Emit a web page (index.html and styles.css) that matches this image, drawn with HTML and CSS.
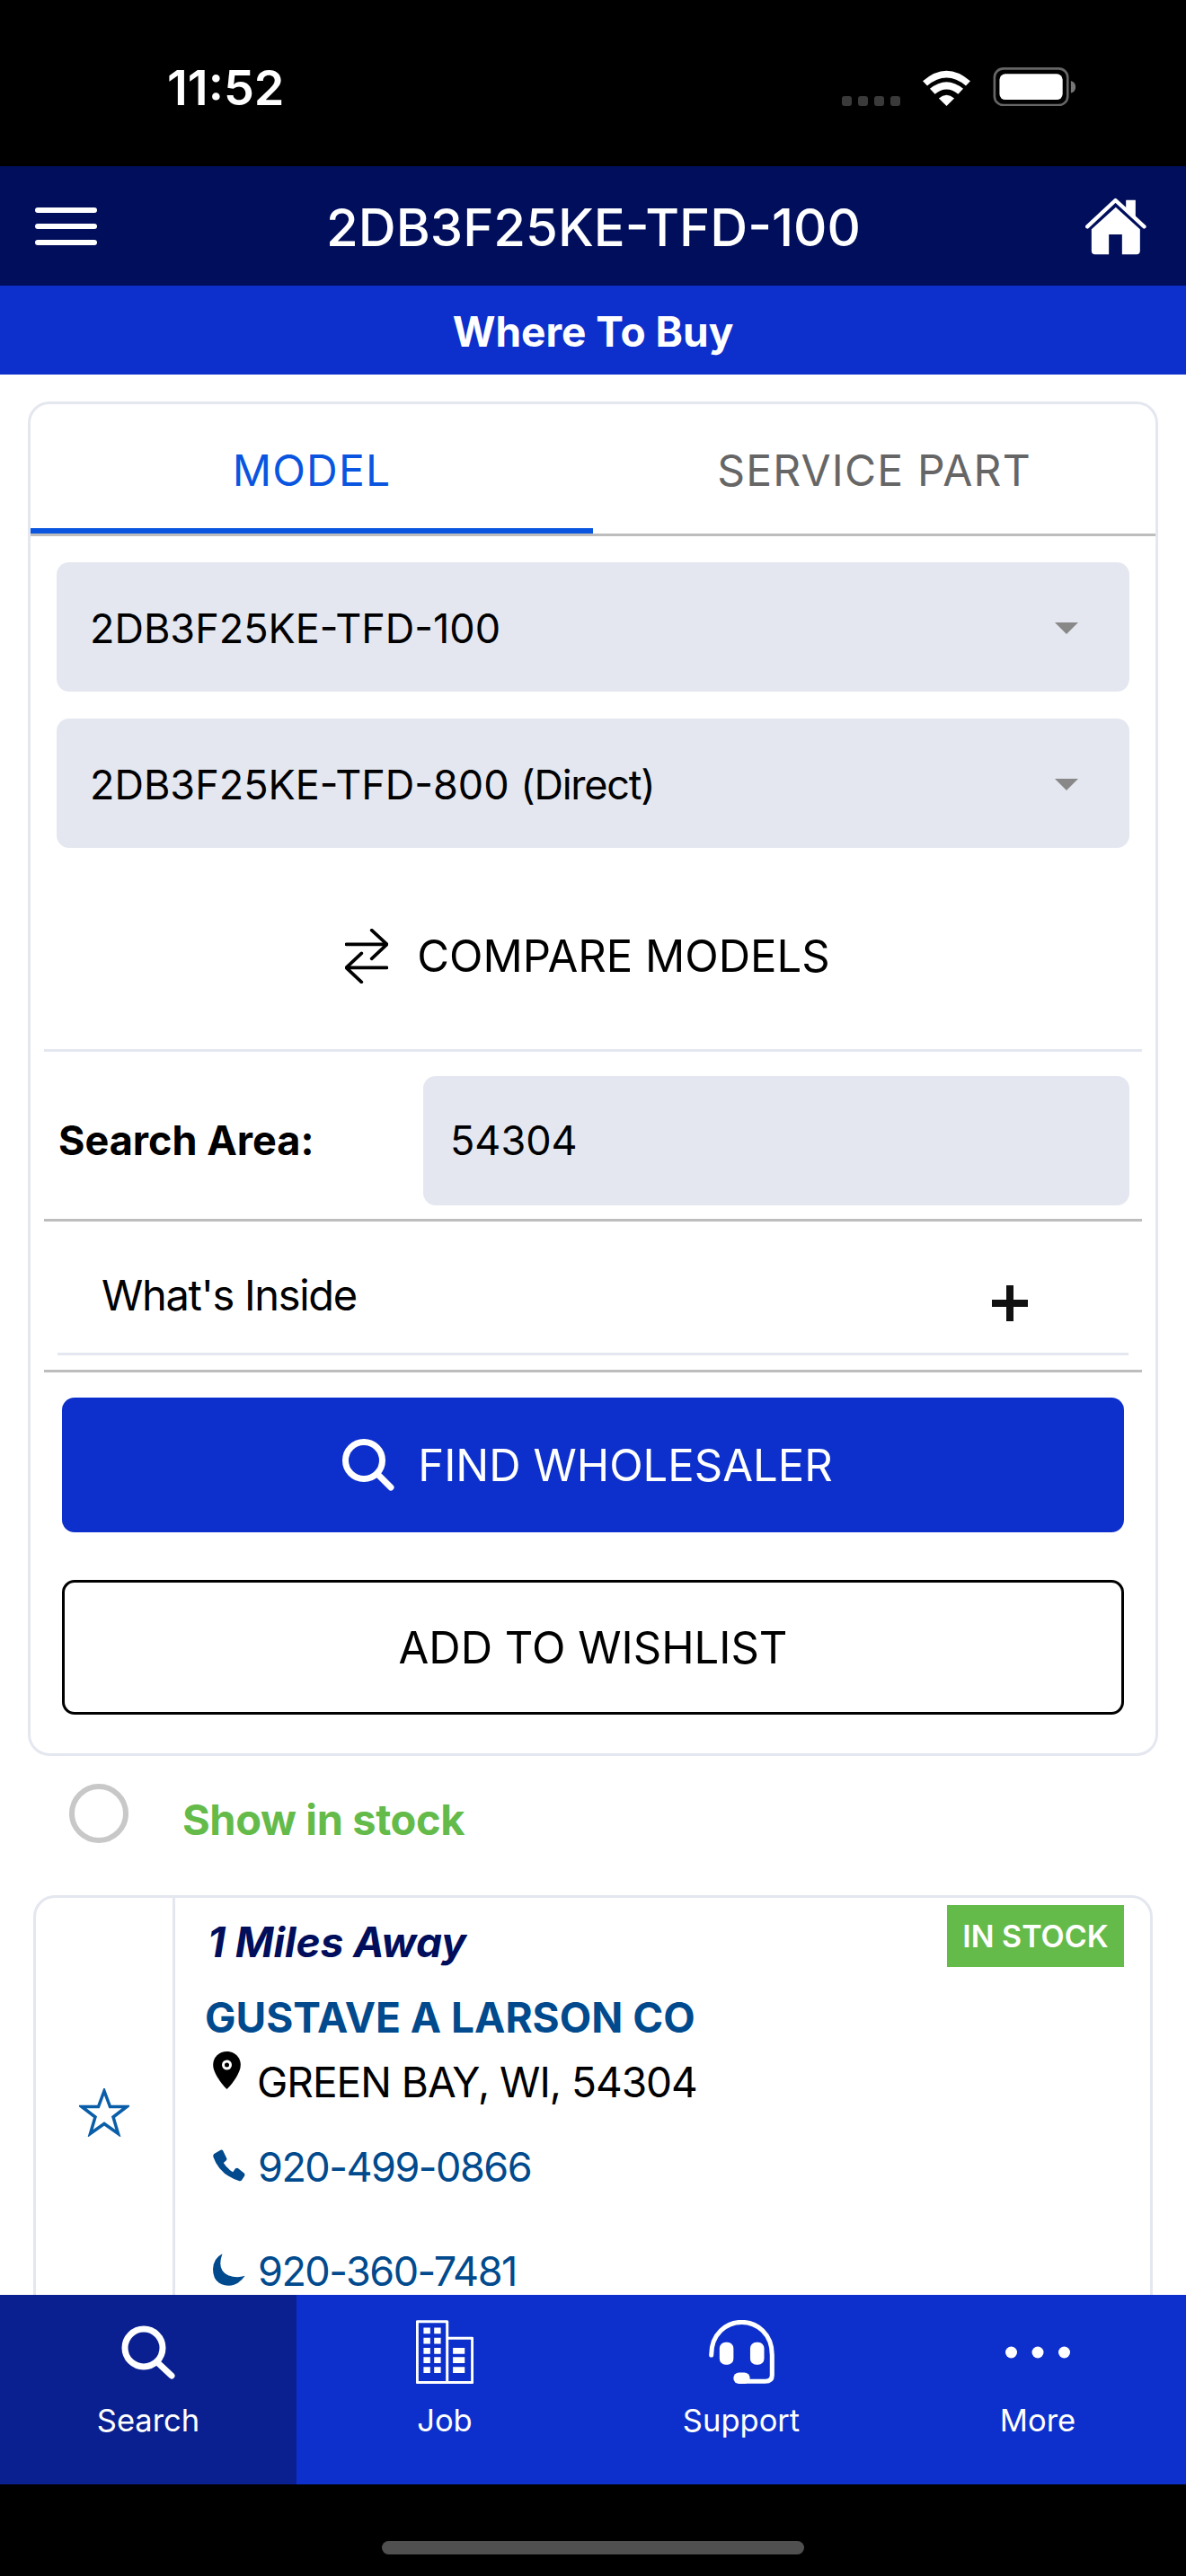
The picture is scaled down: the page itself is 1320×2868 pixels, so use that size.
FILE: index.html
```html
<!DOCTYPE html>
<html lang="en">
  <head>
    <meta charset="UTF-8" />
    <meta name="viewport" content="width=device-width, initial-scale=1.0" />
    <title>Where To Buy</title>
    <link rel="stylesheet" href="styles.css">
  </head>
  <body>
    <div class="app">
      <div class="status">
        <div class="time">11:52</div>
        <div class="status-icons">
          <div class="signal"><span></span><span></span><span></span><span></span></div>
          <svg class="wifi" viewBox="375 105 172 127">
            <path d="M381 148Q461 78 541 148L526 164Q461 110 396 164Z" fill="#fff"/>
            <path d="M405 174Q461 128 517 174L500 192Q461 160 422 192Z" fill="#fff"/>
            <path d="M435 206Q461 184 487 206L461 232Z" fill="#fff"/>
          </svg>
          <svg class="battery" viewBox="615 103 280 131">
            <rect x="619" y="107" width="248" height="124" rx="30" fill="none" stroke="#666" stroke-width="8"/>
            <rect x="636" y="125" width="214" height="88" rx="20" fill="#fff"/>
            <path d="M878 149Q894 153 894 170Q894 186 878 190Z" fill="#777"/>
          </svg>
        </div>
      </div>

      <div class="header">
        <div class="burger"><span></span><span></span><span></span></div>
        <div class="header-title">2DB3F25KE-TFD-100</div>
        <svg class="home" viewBox="925 540 203 192">
          <path d="M1060 548H1092V610L1060 580Z" fill="#fff"/>
          <path d="M931 637L1025 549L1121 637" fill="none" stroke="#fff" stroke-width="13" stroke-linecap="round" stroke-linejoin="round"/>
          <path d="M945 646L1026 572L1107 646V718Q1107 730 1095 730H1047V663H1003V730H957Q945 730 945 718Z" fill="#fff"/>
        </svg>
      </div>
      <div class="subbar">Where To Buy</div>

      <div class="main">
        <div class="card">
          <div class="tabs">
            <div class="tab tab-active">MODEL</div>
            <div class="tab">SERVICE PART</div>
          </div>
          <div class="selects">
            <div class="select"><span>2DB3F25KE-TFD-100</span><span class="caret"></span></div>
            <div class="select"><span>2DB3F25KE-TFD-800 <span class="select-note">(Direct)</span></span><span class="caret"></span></div>
          </div>
          <div class="compare">
            <svg class="compare-icon" viewBox="46 38 144 183">
              <path d="M50 90H186M135 43L186 90L135 138M186 168H50M101 120L50 168L101 216" fill="none" stroke="#000" stroke-width="11" stroke-linecap="round" stroke-linejoin="round"/>
            </svg>
            COMPARE MODELS
          </div>
          <div class="search-row">
            <div class="search-label">Search Area:</div>
            <div class="search-input">54304</div>
          </div>
          <div class="inside-wrap">
            <div class="inside">
              <span>What's Inside</span>
              <svg class="plus" viewBox="0 0 40 40"><path d="M16 0H24V16H40V24H24V40H16V24H0V16H16Z" fill="#111"/></svg>
            </div>
          </div>
          <div class="actions">
            <div class="btn btn-blue">
              <svg class="btn-icon" viewBox="0 0 58 58">
                <circle cx="24" cy="24" r="20.5" fill="none" stroke="#fff" stroke-width="7"/>
                <path d="M39 39L54 54" stroke="#fff" stroke-width="7" stroke-linecap="round"/>
              </svg>
              FIND WHOLESALER
            </div>
            <div class="btn btn-outline">ADD TO WISHLIST</div>
          </div>
        </div>

        <div class="stock-toggle">
          <span class="radio"></span>
          <span class="stock-label">Show in stock</span>
        </div>

        <div class="result">
          <div class="result-fav">
            <svg class="star" viewBox="0 0 56 54">
              <path d="M28 3L34.5 20.5H53L38 32L43.5 50.500L28 39.500L12.500 50.500L18 32L3 20.500H21.500Z" fill="none" stroke="#0a5ea8" stroke-width="3.500" stroke-linejoin="miter"/>
            </svg>
          </div>
          <div class="result-body">
            <span class="badge">IN STOCK</span>
            <div class="distance">1 Miles Away</div>
            <div class="company">GUSTAVE A LARSON CO</div>
            <div class="line line-address">
              <svg class="pin" viewBox="50 27 92 126">
                <path d="M96 27C122 27 142 47 142 72C142 100 110 140 96 153C82 140 50 100 50 72C50 47 70 27 96 27Z" fill="#000"/>
                <circle cx="96" cy="72" r="12" fill="none" stroke="#fff" stroke-width="9"/>
              </svg>
              GREEN BAY, WI, 54304
            </div>
            <div class="line line-phone">
              <svg class="line-icon" viewBox="48 340 110 108">
                <path d="M52 354L74 341Q80 339 83 345L95 370Q96 375 92 378L84 385Q96 405 116 416L124 405Q128 401 133 403L154 420Q158 424 155 430L146 444Q142 448 136 446Q70 425 49 364Q48 357 52 354Z" fill="#004a8d"/>
              </svg>
              920-499-0866
            </div>
            <div class="line line-phone line-night">
              <svg class="line-icon" viewBox="48 690 110 108">
                <path d="M80 690Q60 745 100 763Q128 775 157 765Q135 798 100 798Q48 795 48 742Q50 705 80 690Z" fill="#004a8d"/>
              </svg>
              920-360-7481
            </div>
          </div>
        </div>
      </div>

      <div class="nav">
        <div class="nav-item nav-active">
          <svg class="nav-icon" width="62" height="71" viewBox="0 -6 62 71">
            <circle cx="26" cy="25" r="21" fill="none" stroke="#fff" stroke-width="7"/>
            <path d="M41 41L57 56" stroke="#fff" stroke-width="7" stroke-linecap="round"/>
          </svg>
          Search
        </div>
        <div class="nav-item">
          <svg class="nav-icon" width="64" height="71" viewBox="70 40 190 210">
            <path d="M74 45H173V246H74ZM173 100H256V246H173Z" fill="none" stroke="#fff" stroke-width="9" stroke-linejoin="round"/>
            <path d="M95 65h22v20H95zM130 65h22v20h-22zM95 98h22v20H95zM130 98h22v20h-22zM95 132h22v20H95zM130 132h22v20h-22zM95 162h22v20H95zM130 162h22v20h-22zM95 195h22v20H95zM130 195h22v20h-22zM192 132h39v20h-39zM192 162h39v20h-39zM192 195h39v20h-39z" fill="#fff"/>
          </svg>
          Job
        </div>
        <div class="nav-item">
          <svg class="nav-icon" width="73" height="71" viewBox="1048 40 214 210">
            <path d="M1055 155C1055 85 1105 47 1155 47C1205 47 1255 85 1255 155V222Q1255 242 1232 242H1160" fill="none" stroke="#fff" stroke-width="15" stroke-linecap="round"/>
            <rect x="1082" y="113" width="46" height="74" rx="20" fill="#fff"/>
            <rect x="1183" y="113" width="46" height="74" rx="20" fill="#fff"/>
            <rect x="1128" y="213" width="54" height="37" rx="18" fill="#fff"/>
          </svg>
          Support
        </div>
        <div class="nav-item">
          <svg class="nav-icon" width="72" height="71" viewBox="0 0 72 71">
            <circle cx="6.500" cy="36" r="6.500" fill="#fff"/>
            <circle cx="36" cy="36" r="6.500" fill="#fff"/>
            <circle cx="65.500" cy="36" r="6.500" fill="#fff"/>
          </svg>
          More
        </div>
      </div>

      <div class="homebar"><span></span></div>
    </div>
  </body>
</html>
```

FILE: styles.css
```css
* {
  box-sizing: border-box;
}
body {
  margin: 0;
  font-family: Inter, "Liberation Sans", sans-serif;
  color: #000;
  background: #000;
}
.app {
  width: 1320px;
  height: 2868px;
  display: flex;
  flex-direction: column;
  overflow: hidden;
}

/* status bar */
.status {
  height: 185px;
  flex: none;
  display: flex;
  justify-content: space-between;
  padding: 66px 122px 0 186px;
  color: #fff;
  align-items: flex-start;
}
.time {
  font-size: 54px;
  font-weight: 600;
  line-height: 64px;
}
.status-icons {
  display: flex;
  align-items: flex-end;
  margin-top: 9px;
  height: 43px;
}
.signal {
  display: flex;
  gap: 7px;
  margin-right: 23px;
}
.signal span {
  width: 11px;
  height: 11px;
  border-radius: 3px;
  background: #3a3a3a;
}
.wifi {
  width: 57px;
  height: 42px;
  margin-right: 23px;
}
.battery {
  width: 93px;
  height: 43px;
}

/* header */
.header {
  height: 133px;
  flex: none;
  background: #000e5c;
  color: #fff;
  display: flex;
  align-items: center;
  justify-content: space-between;
  padding: 0 44px 0 39px;
}
.burger {
  width: 69px;
  display: flex;
  flex-direction: column;
  gap: 12px;
}
.burger span {
  height: 6px;
  border-radius: 3px;
  background: #fff;
}
.header-title {
  font-size: 58px;
  font-weight: 500;
  margin-left: 5px;
  padding-top: 3px;
}
.home {
  width: 68px;
  height: 64px;
}
.subbar {
  height: 99px;
  flex: none;
  background: #0d30cc;
  color: #fff;
  font-size: 46px;
  font-weight: 700;
  display: flex;
  align-items: center;
  justify-content: center;
  padding-top: 2px;
}

/* main scroll area */
.main {
  flex: 1;
  min-height: 0;
  overflow: hidden;
  background: #fff;
  padding: 30px 31px 0;
}
.card {
  height: 1508px;
  border: 3px solid #e4e7ef;
  border-radius: 24px;
}
.tabs {
  display: flex;
  height: 147px;
  border-bottom: 3px solid #bdbdbd;
}
.tab {
  flex: 1;
  height: 144px;
  display: flex;
  align-items: center;
  justify-content: center;
  font-size: 48px;
  letter-spacing: 1.2px;
  color: #666;
  padding-top: 2px;
}
.tab-active {
  color: #0a55e0;
  border-bottom: 6px solid #0a55e0;
  padding-top: 8px;
}
.selects {
  padding: 29px 29px 0;
  display: flex;
  flex-direction: column;
  gap: 30px;
}
.select {
  height: 144px;
  background: #e4e7ef;
  border-radius: 14px;
  padding: 2px 37px 0;
  font-size: 45px;
  display: flex;
  align-items: center;
  justify-content: space-between;
}
.select-note {
  letter-spacing: -1.25px;
}
.caret {
  width: 0;
  height: 0;
  border-left: 13px solid transparent;
  border-right: 13px solid transparent;
  border-top: 13px solid #888;
  margin-right: 20px;
}
.compare {
  height: 227px;
  margin: 0 15px;
  border-bottom: 3px solid #e4e7ef;
  display: flex;
  align-items: center;
  justify-content: center;
  gap: 32px;
  font-size: 49px;
  padding: 17px 12px 0 0;
}
.compare-icon {
  width: 48px;
  height: 61px;
}
.search-row {
  margin: 0 15px;
  height: 189px;
  border-bottom: 3px solid #bdbdbd;
  padding: 27px 14px 0 16px;
  display: flex;
  align-items: flex-start;
}
.search-label {
  width: 406px;
  font-size: 45px;
  font-weight: 700;
  line-height: 144px;
}
.search-input {
  flex: 1;
  height: 144px;
  background: #e4e7ef;
  border-radius: 14px;
  padding-left: 30px;
  font-size: 45px;
  line-height: 144px;
}
.inside-wrap {
  margin: 0 15px;
  height: 168px;
  border-bottom: 3px solid #bdbdbd;
  padding: 0 15px;
}
.inside {
  height: 149px;
  border-bottom: 3px solid #e4e7ef;
  display: flex;
  align-items: center;
  justify-content: space-between;
  padding: 0 112px 0 49px;
  font-size: 47px;
  letter-spacing: -1.3px;
}
.inside span {
  margin-top: 16px;
}
.plus {
  width: 40px;
  height: 40px;
  margin-top: 36px;
}
.actions {
  padding: 28px 35px 0;
  display: flex;
  flex-direction: column;
  gap: 53px;
}
.btn {
  height: 150px;
  border-radius: 14px;
  display: flex;
  align-items: center;
  justify-content: center;
  font-size: 49px;
}
.btn-blue {
  background: #0d30cc;
  color: #fff;
  gap: 26px;
  padding-right: 12px;
}
.btn-icon {
  width: 58px;
  height: 58px;
}
.btn-outline {
  border: 3px solid #000;
}

/* in stock toggle */
.stock-toggle {
  display: flex;
  align-items: flex-start;
  height: 155px;
  padding: 31px 0 0 46px;
}
.radio {
  width: 66px;
  height: 66px;
  border-radius: 50%;
  border: 6px solid #c8c8c8;
}
.stock-label {
  margin-left: 60px;
  color: #64bb4a;
  font-size: 47px;
  font-weight: 700;
  line-height: 80px;
  letter-spacing: -0.4px;
}

/* result card */
.result {
  margin: 0 6px;
  height: 600px;
  border: 3px solid #e4e7ef;
  border-radius: 24px;
  display: flex;
}
.result-fav {
  width: 155px;
  height: 488px;
  flex: none;
  border-right: 3px solid #e4e7ef;
  display: flex;
  align-items: flex-start;
  justify-content: center;
  padding-top: 212px;
}
.result-body {
  flex: 1;
  position: relative;
  padding: 21px 0 0 33px;
}
.star {
  width: 56px;
  height: 54px;
}
.badge {
  position: absolute;
  top: 8px;
  right: 29px;
  width: 197px;
  height: 69px;
  background: #64bb4a;
  color: #fff;
  font-size: 34px;
  font-weight: 600;
  display: flex;
  align-items: center;
  justify-content: center;
}
.distance {
  color: #000e5c;
  font-size: 46px;
  font-weight: 700;
  font-style: italic;
  line-height: 56px;
  padding-left: 3px;
}
.company {
  color: #004a8d;
  font-size: 46px;
  font-weight: 700;
  line-height: 56px;
  margin-top: 28px;
}
.line {
  display: flex;
  align-items: center;
  font-size: 46px;
  line-height: 56px;
  letter-spacing: -1px;
  padding-left: 9px;
}
.line-address {
  margin-top: 16px;
  gap: 18px;
}
.pin {
  width: 31px;
  height: 42px;
  margin-top: -26px;
}
.line-phone {
  color: #004a8d;
  gap: 14px;
  font-size: 45px;
  line-height: 46px;
  letter-spacing: -1.5px;
  margin-top: 44px;
}
.line-night {
  margin-top: 70px;
}
.line-icon {
  width: 36px;
  height: 36px;
  margin-top: -4px;
}

/* bottom nav */
.nav {
  height: 211px;
  flex: none;
  background: #0d30cc;
  display: flex;
  position: relative;
}
.nav-item {
  flex: 1;
  display: flex;
  flex-direction: column;
  align-items: center;
  color: #fff;
  font-size: 34.5px;
  padding-top: 28px;
  line-height: 44px;
}
.nav-icon {
  margin-bottom: 19px;
}
.nav-active {
  background: #0a2090;
}
.homebar {
  height: 102px;
  flex: none;
  background: #000;
  padding-top: 63px;
  display: flex;
  justify-content: center;
}
.homebar span {
  width: 470px;
  height: 15px;
  border-radius: 8px;
  background: #505050;
}
```
